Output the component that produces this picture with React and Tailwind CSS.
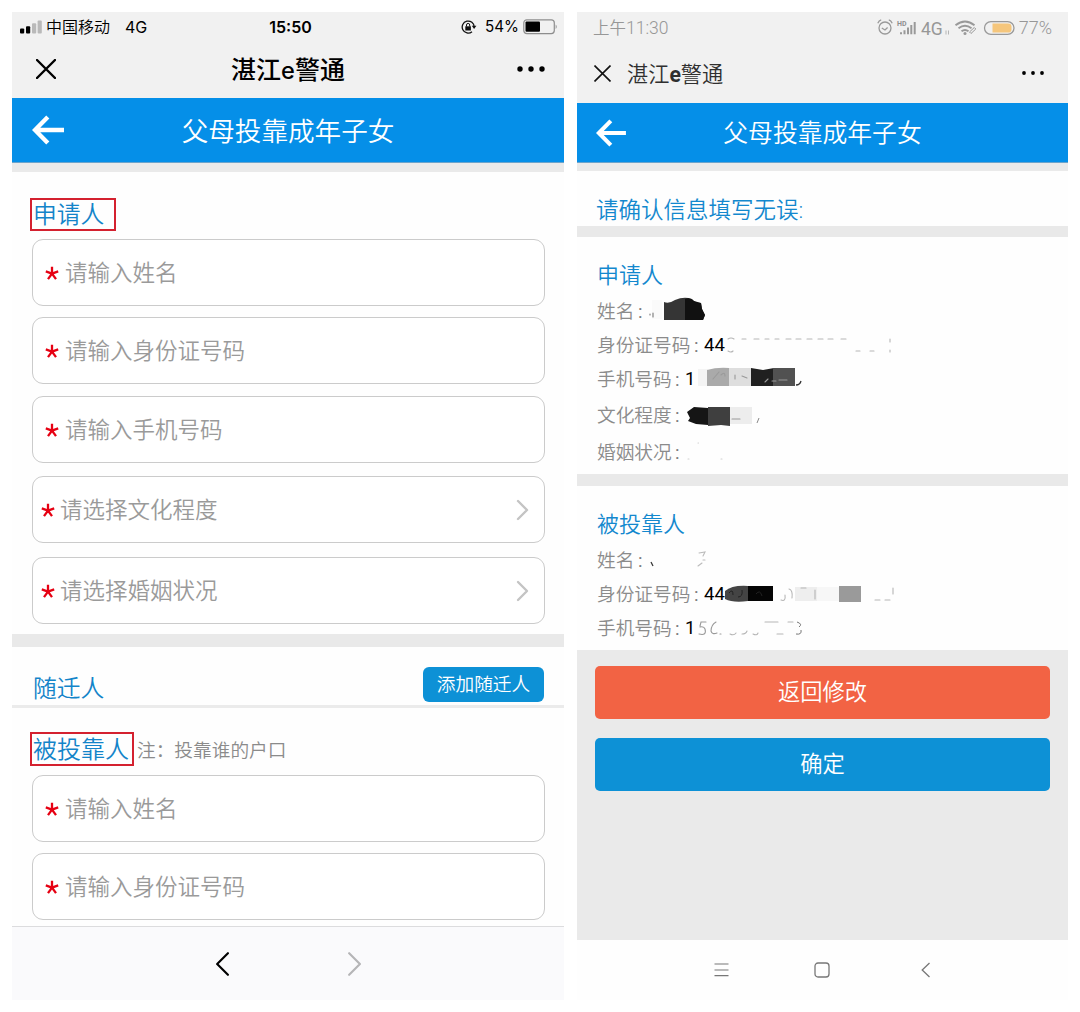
import React from "react";

const cjk = "font-['Roboto','Noto_Sans_CJK_SC',sans-serif]";
const ios = "font-['Inter','Noto_Sans_CJK_SC',sans-serif]";

function BackArrow({ className }) {
  return (
    <svg viewBox="0 0 32 30" className={className} fill="none" stroke="#fff" strokeWidth="4.4">
      <path d="M15.8 2 3 15l12.8 13M3.2 15H32" />
    </svg>
  );
}

function Chevron({ className, d = "M2 2l9 9-9 9", w = 2 }) {
  return (
    <svg viewBox="0 0 13 22" className={className} fill="none" stroke="currentColor" strokeWidth={w} strokeLinecap="round" strokeLinejoin="round">
      <path d={d} />
    </svg>
  );
}

function Star() {
  return (
    <svg viewBox="0 0 14 14" className="h-[14px] w-[14px] shrink-0" stroke="#e60012" strokeWidth="2.3" fill="none">
      <path d="M7 7.6V.8M7 7.6.8 5.4M7 7.6l6.2-2.2M7 7.6l-4 5.5M7 7.6l4 5.5" />
    </svg>
  );
}

function Field({ children, select, className = "" }) {
  return (
    <div className={`flex h-[67px] w-[513px] items-center rounded-[11px] border-[1.5px] border-[#cbcbcb] bg-white text-[22.5px] leading-none font-[350] text-[#9a9a9a] ${select ? "pl-[8px]" : "pl-[12px]"} ${className}`}>
      <Star />
      <span className={`pt-[2px] whitespace-nowrap ${select ? "ml-[5px]" : "ml-[6px]"}`}>{children}</span>
      {select && <Chevron w={2.4} className="mr-[15px] ml-auto h-[22px] w-[13px] text-[#c4c4c4]" />}
    </div>
  );
}

function LeftPhone() {
  return (
    <section className={`flex h-[988px] w-[552px] flex-col bg-[#fefefe] ${ios}`}>
      <header className="h-[86px] bg-[#f1f1f1] text-black">
        <div className="grid h-[30px] grid-cols-3 items-center pr-[6px] pl-[8px] text-[16px] leading-none">
          <div className="flex items-center">
            <svg viewBox="0 0 22 14" className="mr-[4px] h-[14px] w-[22px]">
              <rect x="0" y="8.5" width="4.2" height="5" rx="1" />
              <rect x="6" y="6.2" width="4.2" height="7.3" rx="1" />
              <rect x="12" y="3.2" width="4.2" height="10.3" rx="1" fill="#b9b9b9" />
              <rect x="17.6" y="0.5" width="4.2" height="13" rx="1" fill="#b9b9b9" />
            </svg>
            <span className="font-[350] whitespace-nowrap">中国移动</span>
            <span className="ml-[15px]">4G</span>
          </div>
          <div className="pl-[3px] text-center text-[16px] font-semibold">15:50</div>
          <div className="flex items-center justify-end">
            <svg viewBox="0 0 16 14" className="mr-[8px] h-[14px] w-[16px]" fill="none" stroke="#111" strokeWidth="1.3">
              <path d="M13.2 7A6 6 0 1 0 11 11.7M13.2 7v-1" />
              <path d="M10.8 5.8h4.6L13.1 9z" fill="#111" stroke="none" />
              <rect x="4.3" y="6.3" width="5.6" height="4.2" fill="#111" stroke="none" />
              <path d="M5.5 6.5V5a1.6 1.6 0 0 1 3.2 0v1.5" strokeWidth="1" />
            </svg>
            <span className="text-[15.2px]">54%</span>
            <svg viewBox="0 0 35 16" className="ml-[4px] h-[16px] w-[35px]">
              <rect x="0.8" y="0.8" width="30.5" height="13.8" rx="3" fill="none" stroke="#8d8d8d" strokeWidth="1.2" />
              <rect x="2.5" y="2.6" width="14.5" height="10.2" rx="1" />
              <path d="M32.7 5.5q2 2.2 0 4.6z" fill="#8d8d8d" />
            </svg>
          </div>
        </div>
        <div className="grid h-[54px] grid-cols-[140px_1fr_140px] items-center">
          <svg viewBox="0 0 20 20" className="ml-[24px] h-[20px] w-[20px]" stroke="#000" strokeWidth="2.4" strokeLinecap="round">
            <path d="M1 1l18 18M19 1 1 19" />
          </svg>
          <h1 className="pt-[2px] text-center text-[25px] leading-none font-medium whitespace-nowrap">湛江<span className="text-[23.5px]">e</span>警通</h1>
          <svg viewBox="0 0 28 6" className="mr-[19px] ml-auto h-[6px] w-[28px]">
            <circle cx="3" cy="3" r="2.7" /><circle cx="14" cy="3" r="2.7" /><circle cx="25" cy="3" r="2.7" />
          </svg>
        </div>
      </header>
      <div className="grid h-[65px] grid-cols-[80px_1fr_80px] items-center border-b border-[#6ba4cc] bg-[#058fe8]">
        <BackArrow className="ml-[20px] h-[30px] w-[32px]" />
        <div className="pt-[2px] text-center text-[26.6px] leading-none font-[350] whitespace-nowrap text-white">父母投靠成年子女</div>
      </div>
      <div className="h-[9px] bg-[#eaeaea]" />

      <div className="pt-[26px] pl-[18px]">
        <div className="flex h-[33px] w-[86px] items-center border-2 border-[#d4212f] pl-[1px] text-[23.8px] leading-none font-[350] whitespace-nowrap text-[#1384c9]">申请人</div>
        <div className="mt-[8px] ml-[2px] flex flex-col">
          <Field>请输入姓名</Field>
          <Field className="mt-[11px]">请输入身份证号码</Field>
          <Field className="mt-[12px]">请输入手机号码</Field>
          <Field select className="mt-[13px]">请选择文化程度</Field>
          <Field select className="mt-[14px]">请选择婚姻状况</Field>
        </div>
      </div>
      <div className="mt-[10px] h-[13px] shrink-0 bg-[#e9e9e9]" />

      <div className="flex h-[61px] shrink-0 items-center justify-between border-b-[3px] border-[#ebebeb] pt-[17px] pr-[20px] pl-[21px]">
        <span className="pt-[8px] text-[23.8px] leading-none font-[350] text-[#1384c9]">随迁人</span>
        <button className="h-[35px] w-[121px] rounded-[6px] bg-[#0d91d6] pt-[2px] text-[18.7px] leading-none font-[350] whitespace-nowrap text-white">添加随迁人</button>
      </div>

      <div className="pt-[24px] pl-[18px]">
        <div className="flex items-center whitespace-nowrap">
          <div className="flex h-[34px] w-[104px] items-center border-2 border-[#d4212f] pt-[1px] pl-[1px] text-[24px] leading-none font-[350] text-[#1384c9]">被投靠人</div>
          <span className="ml-[3px] pt-[5px] text-[18.7px] leading-none font-[350] text-[#8b8b8b]">注：投靠谁的户口</span>
        </div>
        <div className="mt-[9px] ml-[2px] flex flex-col">
          <Field>请输入姓名</Field>
          <Field className="mt-[11px]">请输入身份证号码</Field>
        </div>
      </div>

      <nav className="mt-auto flex h-[74px] shrink-0 items-center border-t-[1.5px] border-[#dcdcde] bg-[#fafafc] pl-[203px]">
        <Chevron className="h-[24px] w-[14px] text-black" d="M12 1 2 11l10 10" w={2} />
        <Chevron className="ml-[118px] h-[24px] w-[14px] text-[#b5b5b7]" d="M2 1l10 10L2 21" w={2} />
      </nav>
    </section>
  );
}

const labelWidths = { 2: "w-[38px]", 4: "w-[75px]", 5: "w-[94px]" };

function InfoRow({ label, value, children, className = "h-[34px]" }) {
  return (
    <div className={`flex items-center text-[18.7px] leading-none whitespace-nowrap ${className}`}>
      <span className={`shrink-0 pt-[2px] font-[350] text-[#8b8b8b] ${labelWidths[label.length]}`}>{label}</span>
      <span className="w-[13px] pt-[2px] pl-[3px] font-normal text-[#7c7c7c]">:</span>
      <span className="pt-[1px] text-[18.5px] text-black">{value}</span>
      <svg viewBox="0 0 220 24" className="h-[24px] w-[220px] overflow-visible">{children}</svg>
    </div>
  );
}

function Specks({ d, color = "#b5b5b5" }) {
  return <path d={d} fill="none" stroke={color} strokeWidth="1.1" strokeLinecap="round" />;
}

function RightPhone() {
  return (
    <section className={`flex h-[988px] w-[491px] flex-col bg-[#fefefe] ${cjk}`}>
      <header className="h-[91px] bg-[#f1f1f1]">
        <div className="flex h-[32px] items-center pr-[16px] pl-[16px] text-[18px] leading-none text-[#979797]">
          <span className="pt-[1px] text-[16.5px] font-[350] whitespace-nowrap">上午<span className="text-[17.5px]">11:30</span></span>
          <svg viewBox="0 0 139 18" className="ml-auto h-[18px] w-[139px]" fill="none" stroke="#999" strokeWidth="1.3">
            <circle cx="8" cy="9" r="6" />
            <path d="M.8 4.3Q2 1.5 4.2.9M11.8.9Q14 1.5 15.2 4.3M4.8 9l3.2 2 2.6-2.4" />
            <text x="20" y="6.5" fontSize="7" fontWeight="700" fill="#8e8e8e" stroke="none">HD</text>
            <path d="M24 15.3v-2M27.5 15.3v-4M31 15.3V8.5M34.3 15.3V6M37.7 15.3V3" strokeWidth="2" />
            <text x="44" y="15.5" fontSize="17.5" fill="#979797" stroke="none">4G</text>
            <path d="M69 11.5v4M71.5 11.5v4" stroke="#b5b5b5" strokeWidth="1" />
            <path d="M78.5 6.2q9.5-7.5 19 0M81.5 9.3q6.5-5 13 0M84.5 12.3q3.5-2.7 7 0" strokeWidth="1.9" />
            <circle cx="88" cy="14.6" r="1.5" fill="#999" stroke="none" />
            <path d="m92.5 13 4.8-4.5 1.5 1.5-4.8 4.5z" strokeWidth="1" />
            <rect x="107.5" y="2.6" width="29.5" height="12.8" rx="6.4" stroke="#999" />
            <path d="M115.5 4.4H131q3.5 0 3.5 3.4v2.4q0 3.4-3.5 3.4h-15.500z" fill="#f5c67c" stroke="none" />
          </svg>
          <span className="ml-[3px] font-[350]">77%</span>
        </div>
        <div className="flex h-[59px] items-center pr-[24px] pb-[1px] pl-[17px]">
          <svg viewBox="0 0 17 17" className="h-[17px] w-[17px]" stroke="#111" strokeWidth="1.6">
            <path d="M.5.5l16 16M16.5.5l-16 16" />
          </svg>
          <h1 className="ml-[16px] pt-[3px] text-[21.2px] leading-none font-[350] whitespace-nowrap text-[#2f2f2f]">湛江<span className="font-bold">e</span>警通</h1>
          <svg viewBox="0 0 22 4" className="ml-auto h-[4px] w-[22px]">
            <circle cx="2" cy="2" r="1.9" /><circle cx="11" cy="2" r="1.9" /><circle cx="20" cy="2" r="1.9" />
          </svg>
        </div>
      </header>
      <div className="grid h-[60px] grid-cols-[80px_1fr_80px] items-center border-b border-[#6ba4cc] bg-[#058fe8]">
        <BackArrow className="ml-[19px] h-[28px] w-[30px]" />
        <div className="pt-[3px] text-center text-[24.8px] leading-none font-[350] whitespace-nowrap text-white">父母投靠成年子女</div>
      </div>
      <div className="h-[8px] bg-[#eaeaea]" />
      <div className="flex h-[55px] items-center pt-[23px] pl-[19px] text-[22.5px] leading-none font-[350] text-[#1388ce]">请确认信息填写无误:</div>
      <div className="h-[11px] bg-[#e9e9e9]" />

      <div className="h-[237px] pt-[27px] pl-[20px] text-[#1388ce]">
        <div className="h-[30px] pt-[1px] text-[22px] leading-[22px] font-[350]">申请人</div>
        <InfoRow label="姓名">
          <rect x="4" y="1" width="10" height="19" fill="#fafafa" />
          <Specks d="M2 15v1M5 14v4" color="#777" />
          <path d="M16 3q5 2 11-2 9-4 17-1 3 4 9 4l1 6 3 6-2 5H16z" fill="#353535" />
          <path d="M37 0q5-2 9 2l7 2 1 6 3 6-2 5H37z" fill="#111" />
        </InfoRow>
        <InfoRow label="身份证号码" value="44">
          <Specks d="M3 6q3-2 6 0M3 18q3 2 5 0M17 6h4M29 6h5M40 6h4M50 6h4M61 6h5M71 6h5M82 6h5M93 6h5M103 6h5M116 6h5M131 18h4M145 18h4M165 6v3M165 17v2" />
        </InfoRow>
        <InfoRow label="手机号码" value="1">
          <rect x="3" y="2" width="10" height="17" fill="#f4f4f4" />
          <path d="M12 3q10-3 22-2v18H12z" fill="#aaa" />
          <path d="M34 1h22v18H34z" fill="#dedede" />
          <path d="M56 1l12 2 11-2v18H56z" fill="#202020" />
          <path d="M78 1h22v18H78z" fill="#515151" />
          <Specks d="M18 12l6-7M26 8q4-4 4 1M40 12v-4M47 9l5 2M70 15l3-3M77 14h4M84 13h8" color="#9a9a9a" />
          <path d="M101 18q4 0 5-4" stroke="#333" strokeWidth="1.3" fill="none" />
        </InfoRow>
        <InfoRow label="文化程度" className="h-[39px]">
          <path d="M2 8 9 3l14 1v17l-12-1-8-3 2-3z" fill="#151515" />
          <path d="M23 3h22v19l-9-1-13 1z" fill="#3f3f3f" />
          <path d="M45 3h22v17H45z" fill="#ededed" />
          <Specks d="M47 15h8" color="#999" />
          <path d="M72 19l2-5" stroke="#888" fill="none" />
        </InfoRow>
        <InfoRow label="婚姻状况">
          <Specks d="M3 19h1M13 3h.5M36 19h1" color="#d0d0d0" />
        </InfoRow>
      </div>
      <div className="h-[12px] bg-[#e9e9e9]" />
      <div className="h-[164px] pt-[27px] pl-[20px] text-[#1388ce]">
        <div className="h-[30px] pt-[1px] text-[22px] leading-[22px] font-[350]">被投靠人</div>
        <InfoRow label="姓名">
          <path d="M3 14l2 4" stroke="#333" strokeWidth="1.3" />
          <Specks d="M50 18l4-3M51 5l6-1-2 4M55 12h2" color="#bbb" />
        </InfoRow>
        <InfoRow label="身份证号码" value="44">
          <path d="M0 9q7-6 23-5v15Q8 21 0 17z" fill="#444" />
          <rect x="23" y="4" width="25" height="15" fill="#050505" />
          <path d="M4 11q4-5 4 2M13 15q5 0 4-7M31 12q4-5 6 2" stroke="#222" fill="none" />
          <rect x="70" y="5" width="22" height="14" fill="#eee" />
          <rect x="92" y="5" width="22" height="14" fill="#f7f7f7" />
          <rect x="114" y="4" width="22" height="16" fill="#9a9a9a" />
          <Specks d="M56 18q5 2 4-5M64 7q4 1 3 9M76 6h5M90 8v9M150 18h5M160 18h5M168 6v6" />
        </InfoRow>
        <InfoRow label="手机号码" value="1">
          <Specks d="M5 10l1-4h5M4 18q8 2 6-5-1-3-5-2M21 6q-5 3-5 9 1 4 6 2M25 18h1" color="#999" />
          <Specks d="M35 18q4 2 6-1M47 18q4 0 5-3M58 18q4 2 5-1M70 6h8M78 6h5M82 18h6M93 6h5" />
          <path d="M102 6q6 2 2 5M101 18q6 1 5-4" stroke="#777" fill="none" />
        </InfoRow>
      </div>

      <main className="flex h-[290px] flex-col gap-[19px] bg-[#eaeaea] px-[18px] pt-[16px] text-[22.3px] leading-none font-[350] text-white">
        <button className="h-[53px] w-[455px] rounded-[5px] bg-[#f26344]">返回修改</button>
        <button className="h-[53px] w-[455px] rounded-[5px] bg-[#0d91d6]">确定</button>
      </main>
      <nav className="flex h-[60px] items-center pl-[137px] text-[#777]">
        <svg viewBox="0 0 15 14" className="h-[14px] w-[15px]" stroke="currentColor" strokeWidth="1.2"><path d="M.5 1h14M.5 7h14M.5 12.700h14" /></svg>
        <svg viewBox="0 0 16 16" className="ml-[85px] h-[16px] w-[16px]" fill="none" stroke="currentColor" strokeWidth="1.3"><rect x="1" y="1" width="14" height="14" rx="3" /></svg>
        <svg viewBox="0 0 9 16" className="ml-[91px] h-[16px] w-[9px]" fill="none" stroke="currentColor" strokeWidth="1.3"><path d="M8.5 1 1.2 8l7.3 7" /></svg>
      </nav>
    </section>
  );
}

export default function App() {
  return (
    <div className="flex h-[1012px] w-[1080px] gap-[13px] overflow-hidden bg-white p-3">
      <LeftPhone />
      <RightPhone />
    </div>
  );
}
